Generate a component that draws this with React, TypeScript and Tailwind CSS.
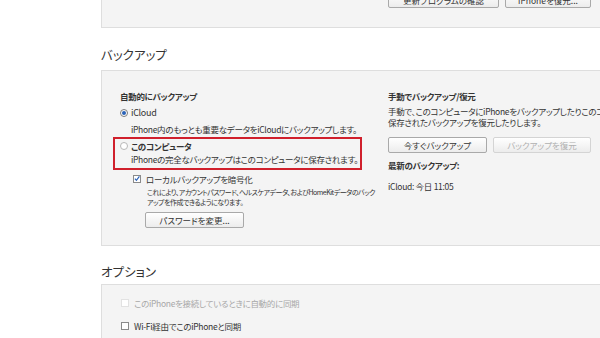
import React from "react";

const jp = "font-['Noto_Sans_CJK_JP','Noto_Sans',sans-serif] [font-feature-settings:'palt']";

function Btn({ label, w, disabled }: { label: string; w: string; disabled?: boolean }) {
    return (
        <div
            className={`${w} h-[16px] flex items-center justify-center rounded-[2px] border text-[8.5px] leading-none tracking-normal bg-gradient-to-b from-white to-[#ececec] ${
                disabled ? "border-[#d4d4d4] text-[#b0b0b0]" : "border-[#a9a9a9] text-[#333]"
            }`}
        >
            {label}
        </div>
    );
}

function Radio({ checked }: { checked?: boolean }) {
    return (
        <span
            className={`w-[8px] h-[8px] rounded-full border flex items-center justify-center bg-white shrink-0 ${
                checked ? "border-[#7a7a7a]" : "border-[#b8b8b8]"
            }`}
        >
            {checked && <span className="w-[4px] h-[4px] rounded-full bg-[#2a62b8]" />}
        </span>
    );
}

function Check({ checked, disabled }: { checked?: boolean; disabled?: boolean }) {
    return (
        <span
            className={`w-[8px] h-[8px] border bg-white shrink-0 flex items-center justify-center ${
                disabled ? "border-[#e2e2e2]" : "border-[#8a8a8a]"
            }`}
        >
            {checked && (
                <svg viewBox="0 0 10 10" className="w-[9px] h-[9px] -mt-[1px]">
                    <path d="M1.5 5.2 L4 8 L9 1.5" fill="none" stroke="#2a62b8" strokeWidth="2" />
                </svg>
            )}
        </span>
    );
}

export default function App() {
    return (
        <div className={`w-[600px] h-[338px] overflow-hidden bg-white text-[#333] ${jp}`}>
            <div className="pl-[101px]">
                {/* summary panel, cut off at the top */}
                <div className="-mt-[20px] h-[48px] w-[520px] border border-[#dedede] bg-[#f4f4f4] pl-[286px] pt-[11px] flex gap-[6px]">
                    <Btn label="更新プログラムの確認" w="w-[111px]" />
                    <Btn label="iPhoneを復元..." w="w-[86px]" />
                </div>

                <div className="mt-[19px] mb-[7px] h-[16px] text-[12.5px] leading-[16px]">バックアップ</div>

                <div className="h-[176px] w-[520px] border border-[#dedede] bg-[#f4f4f4] pl-[18px] pt-[19px] flex text-[8.5px] tracking-[-0.3px] whitespace-nowrap">
                    {/* automatic */}
                    <div className="w-[268px] shrink-0 flex flex-col">
                        <div className="h-[12px] leading-[12px] font-bold">自動的にバックアップ</div>
                        <div className="mt-[5px] h-[12px] flex items-center gap-[3px]">
                            <Radio checked />
                            <span className="leading-[12px] text-[9px]">iCloud</span>
                        </div>
                        <div className="mt-[4px] ml-[11px] h-[12px] leading-[12px]">
                            iPhone内のもっとも重要なデータをiCloudにバックアップします。
                        </div>
                        <div className="mt-[2px] -ml-[7px] w-[249px] border-[2px] border-[#d0202c] pl-[5px] pt-[1px] pb-[3px]">
                            <div className="h-[12px] flex items-center gap-[3px]">
                                <Radio />
                                <span className="leading-[12px] font-bold">このコンピュータ</span>
                            </div>
                            <div className="mt-[1px] ml-[11px] h-[12px] leading-[12px]">
                                iPhoneの完全なバックアップはこのコンピュータに保存されます。
                            </div>
                        </div>
                        <div className="mt-[3px] ml-[13px] h-[12px] flex items-center gap-[5px]">
                            <Check checked />
                            <span className="leading-[12px]">ローカルバックアップを暗号化</span>
                        </div>
                        <div className="mt-[2px] ml-[27px] text-[7px] tracking-[-0.5px] leading-[10px]">
                            これにより、アカウントパスワード、ヘルスケアデータ、およびHomeKitデータのバック
                            <br />
                            アップを作成できるようになります。
                        </div>
                        <div className="mt-[5px] ml-[25px]">
                            <Btn label="パスワードを変更..." w="w-[99px]" />
                        </div>
                    </div>

                    {/* manual */}
                    <div className="flex flex-col">
                        <div className="h-[12px] leading-[12px] font-bold">手動でバックアップ/復元</div>
                        <div className="mt-[4px] leading-[11px]">
                            手動で、このコンピュータにiPhoneをバックアップしたりこのコンピュータに
                            <br />
                            保存されたバックアップを復元したりします。
                        </div>
                        <div className="mt-[9px] flex gap-[6px]">
                            <Btn label="今すぐバックアップ" w="w-[99px]" />
                            <Btn label="バックアップを復元" w="w-[98px]" disabled />
                        </div>
                        <div className="mt-[6px] h-[12px] leading-[12px] font-bold">最新のバックアップ:</div>
                        <div className="mt-[9px] h-[12px] leading-[12px]">iCloud: 今日 11:05</div>
                    </div>
                </div>

                <div className="mt-[18px] mb-[4px] h-[16px] text-[12.5px] leading-[16px]">オプション</div>

                <div className="h-[80px] w-[520px] border border-[#dedede] bg-[#f4f4f4] pl-[19px] pt-[12px] flex flex-col text-[8.5px] tracking-[-0.3px] whitespace-nowrap">
                    <div className="h-[12px] flex items-center gap-[5px] text-[#a8a8a8]">
                        <Check disabled />
                        <span className="leading-[12px]">このiPhoneを接続しているときに自動的に同期</span>
                    </div>
                    <div className="mt-[11px] h-[12px] flex items-center gap-[5px]">
                        <Check />
                        <span className="leading-[12px]">Wi-Fi経由でこのiPhoneと同期</span>
                    </div>
                </div>
            </div>
        </div>
    );
}
